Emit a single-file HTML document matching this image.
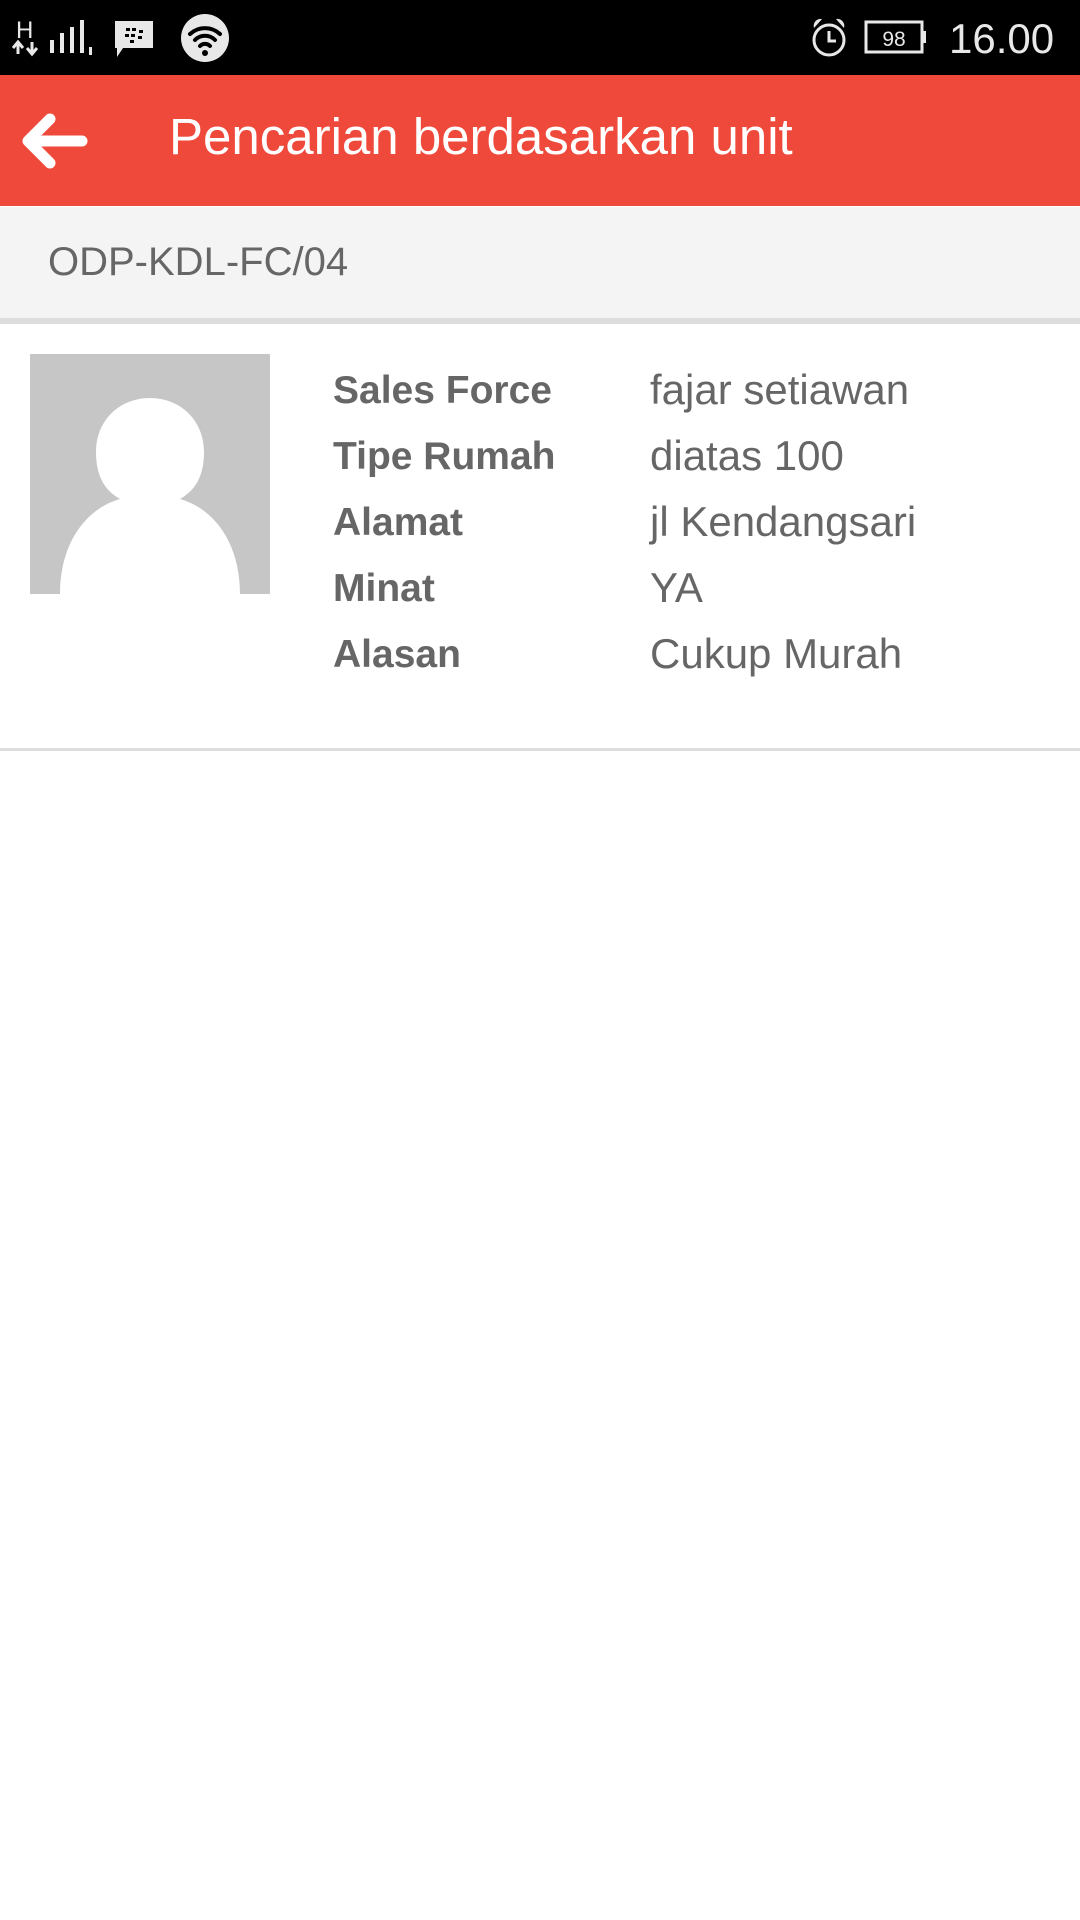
<!DOCTYPE html>
<html><head><meta charset="utf-8"><style>
body{margin:0;width:1080px;height:1920px;background:#fff;font-family:"Liberation Sans",sans-serif;position:relative;overflow:hidden}
.abs{position:absolute}
.sb{left:0;top:0;width:1080px;height:75px;background:#000}
.tb{left:0;top:75px;width:1080px;height:131px;background:#ef493c}
.gb{left:0;top:207px;width:1080px;height:111px;background:#f4f4f4}
.lbl{left:333px;font-weight:bold;color:#666;font-size:39px;line-height:46px}
.val{left:650px;color:#666;font-size:42px;line-height:46px}
</style></head><body>
<div class="abs sb"></div>
<svg class="abs" style="left:0;top:0" width="1080" height="75">
<text x="16" y="38" fill="#e8e8e8" font-size="24" font-family="Liberation Sans">H</text>
<path d="M13 48 l5 -6 l5 6 M18 42 v12 M27 48 l5 6 l5 -6 M32 42 v12" stroke="#e8e8e8" stroke-width="3" fill="none"/>
<rect x="50" y="40" width="4" height="13" fill="#e8e8e8"/><rect x="60" y="33" width="4" height="20" fill="#e8e8e8"/><rect x="70" y="27" width="4" height="26" fill="#e8e8e8"/><rect x="80" y="20" width="4" height="33" fill="#e8e8e8"/>
<rect x="89" y="47" width="3" height="8" fill="#e8e8e8"/>
<path d="M115 21 h38 v27 h-30 l-6 9 v-9 h-2 z" fill="#e8e8e8"/>
<g fill="#000"><rect x="126" y="28" width="4" height="3"/><rect x="132" y="28" width="4" height="3"/><rect x="139" y="30" width="4" height="3"/><rect x="125" y="34" width="4" height="3"/><rect x="131" y="34" width="4" height="3"/><rect x="138" y="36" width="4" height="3"/><rect x="130" y="40" width="4" height="3"/></g>
<circle cx="205" cy="38" r="24" fill="#e8e8e8"/>
<path d="M190 34 a22 22 0 0 1 30 0 M195 40 a14 14 0 0 1 20 0 M200 46 a7 7 0 0 1 10 0" stroke="#000" stroke-width="4" fill="none" stroke-linecap="round"/>
<circle cx="205" cy="53" r="3" fill="#000"/>
<circle cx="829" cy="40" r="15" stroke="#e8e8e8" stroke-width="3" fill="none"/>
<path d="M829 31 v10 h7" stroke="#e8e8e8" stroke-width="3" fill="none"/>
<path d="M814 28 a7 7 0 0 1 8 -9 z M844 28 a7 7 0 0 0 -8 -9 z" fill="#e8e8e8"/>
<rect x="866" y="22" width="56" height="30" stroke="#e8e8e8" stroke-width="3" fill="none"/>
<rect x="922" y="31" width="4" height="12" fill="#e8e8e8"/>
<text x="894" y="46" fill="#e8e8e8" font-size="21" text-anchor="middle" font-family="Liberation Sans">98</text>
<text x="949" y="53" fill="#e8e8e8" font-size="42" font-family="Liberation Sans">16.00</text>
</svg>
<div class="abs tb"></div>
<svg class="abs" style="left:20px;top:112px" width="72" height="60"><path d="M8 29 H62 M30 7 L8 29 L30 51" stroke="#fff" stroke-width="11" stroke-linecap="round" stroke-linejoin="round" fill="none"/></svg>
<div class="abs" style="left:169px;top:106px;color:#fff;font-size:51px;line-height:62px">Pencarian berdasarkan unit</div>
<div class="abs gb"></div>
<div class="abs" style="left:48px;top:237px;color:#666;font-size:40px;line-height:50px">ODP-KDL-FC/04</div>
<div class="abs" style="left:0;top:318px;width:1080px;height:6px;background:#ddd"></div>
<svg class="abs" style="left:30px;top:354px" width="240" height="240">
<rect width="240" height="240" fill="#c6c6c6"/>
<path d="M30 240 C30 190 55 155 90 145 C72 135 66 118 66 98 C66 66 90 44 120 44 C150 44 174 66 174 98 C174 118 168 135 150 145 C185 155 210 190 210 240 Z" fill="#fff"/>
</svg>
<div class="abs lbl" style="top:368px">Sales Force</div>
<div class="abs lbl" style="top:434px">Tipe Rumah</div>
<div class="abs lbl" style="top:500px">Alamat</div>
<div class="abs lbl" style="top:566px">Minat</div>
<div class="abs lbl" style="top:632px">Alasan</div>
<div class="abs val" style="top:367px">fajar setiawan</div>
<div class="abs val" style="top:433px">diatas 100</div>
<div class="abs val" style="top:499px">jl Kendangsari</div>
<div class="abs val" style="top:565px">YA</div>
<div class="abs val" style="top:631px">Cukup Murah</div>
<div class="abs" style="left:0;top:748px;width:1080px;height:3px;background:#ddd"></div>
</body></html>
